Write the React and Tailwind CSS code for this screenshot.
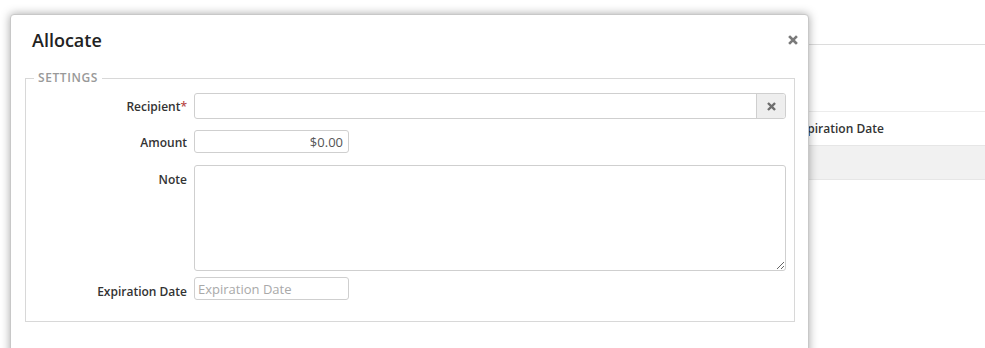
import React from 'react'

const TimesIcon = ({ className }) => (
  <svg viewBox="0 0 10 10" className={className} fill="none" stroke="currentColor" strokeWidth="2.6" strokeLinecap="square">
    <path d="M2 2L8 8M8 2L2 8" />
  </svg>
)

const Row = ({ label, required, className = '', labelClass = 'pt-[6px]', children }) => (
  <div className={`flex items-start gap-[7px] ${className}`}>
    <label className={`w-[161px] shrink-0 text-right text-[12px] leading-[16px] font-semibold text-[#333] ${labelClass}`}>
      {label}
      {required && <span className='text-[#b94a48]'>*</span>}
    </label>
    {children}
  </div>
)

const App = () => {
  return (
    <div className='relative h-[348px] w-[985px] overflow-hidden bg-white' style={{ fontFamily: '"Open Sans", "Noto Sans", sans-serif' }}>
      {/* page behind the dialog */}
      <div className='ml-[200px] pt-[44px]'>
        <div className='border-t border-[#dcdcdc]' />
        <div className='mt-[66px] border-t border-[#ececec]' />
        <div className='flex h-[33px] items-center pl-[594px] text-[12px] font-semibold text-[#333]'>Expiration Date</div>
        <div className='h-[35px] border-y border-[#e6e6e6] bg-[#f1f1f1]' />
      </div>

      {/* dialog */}
      <div className='absolute left-[10px] top-[14px] bottom-[-10px] w-[799px] rounded-t-[4px] border border-[#c8c8c8] bg-white shadow-[0_0_10px_rgba(0,0,0,0.35)]'>
        <div className='flex items-center justify-between pl-[21px] pr-[10px] pt-[13px]'>
          <h1 className='text-[18px] leading-[24px] font-semibold text-[#222]'>Allocate</h1>
          <button type='button' className='text-[#7a7a7a]'>
            <TimesIcon className='w-[10px] h-[10px]' />
          </button>
        </div>

        <fieldset className='ml-[14px] mr-[13px] mt-[18px] border border-[#d8d8d8] pl-0 pr-[8px] pt-[7px] pb-[21px]'>
          <legend className='ml-[8px] px-[4px] text-[12px] leading-[16px] font-semibold tracking-[0.05em] text-[#999]'>SETTINGS</legend>

          <Row label='Recipient' required labelClass='pt-[6px]'>
            <div className='flex h-[26px] flex-1 rounded-[3px] border border-[#cfcfcf]'>
              <input type='text' className='flex-1 px-[6px] text-[12px] outline-none' />
              <button type='button' className='flex w-[29px] items-center justify-center rounded-r-[3px] border-l border-[#cfcfcf] bg-[#eeeeee] text-[#6e6e6e]'>
                <TimesIcon className='w-[9px] h-[9px]' />
              </button>
            </div>
          </Row>

          <Row label='Amount' className='mt-[11px]' labelClass='pt-[5px]'>
            <input
              type='text'
              defaultValue='$0.00'
              className='h-[23px] w-[155px] rounded-[3px] border border-[#cfcfcf] px-[5px] text-right text-[13px] text-[#555] outline-none'
            />
          </Row>

          <Row label='Note' className='mt-[12px]' labelClass='pt-[7px]'>
            <textarea className='h-[106px] flex-1 rounded-[3px] border border-[#cfcfcf] px-[6px] py-[4px] text-[12px] outline-none' />
          </Row>

          <Row label='Expiration Date' className='mt-[6px]' labelClass='pt-[7px]'>
            <input
              type='text'
              placeholder='Expiration Date'
              className='h-[23px] w-[155px] rounded-[3px] border border-[#cfcfcf] px-[3px] text-[13px] text-[#555] placeholder:text-[#a9a9a9] outline-none'
            />
          </Row>
        </fieldset>
      </div>
    </div>
  )
}

export default App
